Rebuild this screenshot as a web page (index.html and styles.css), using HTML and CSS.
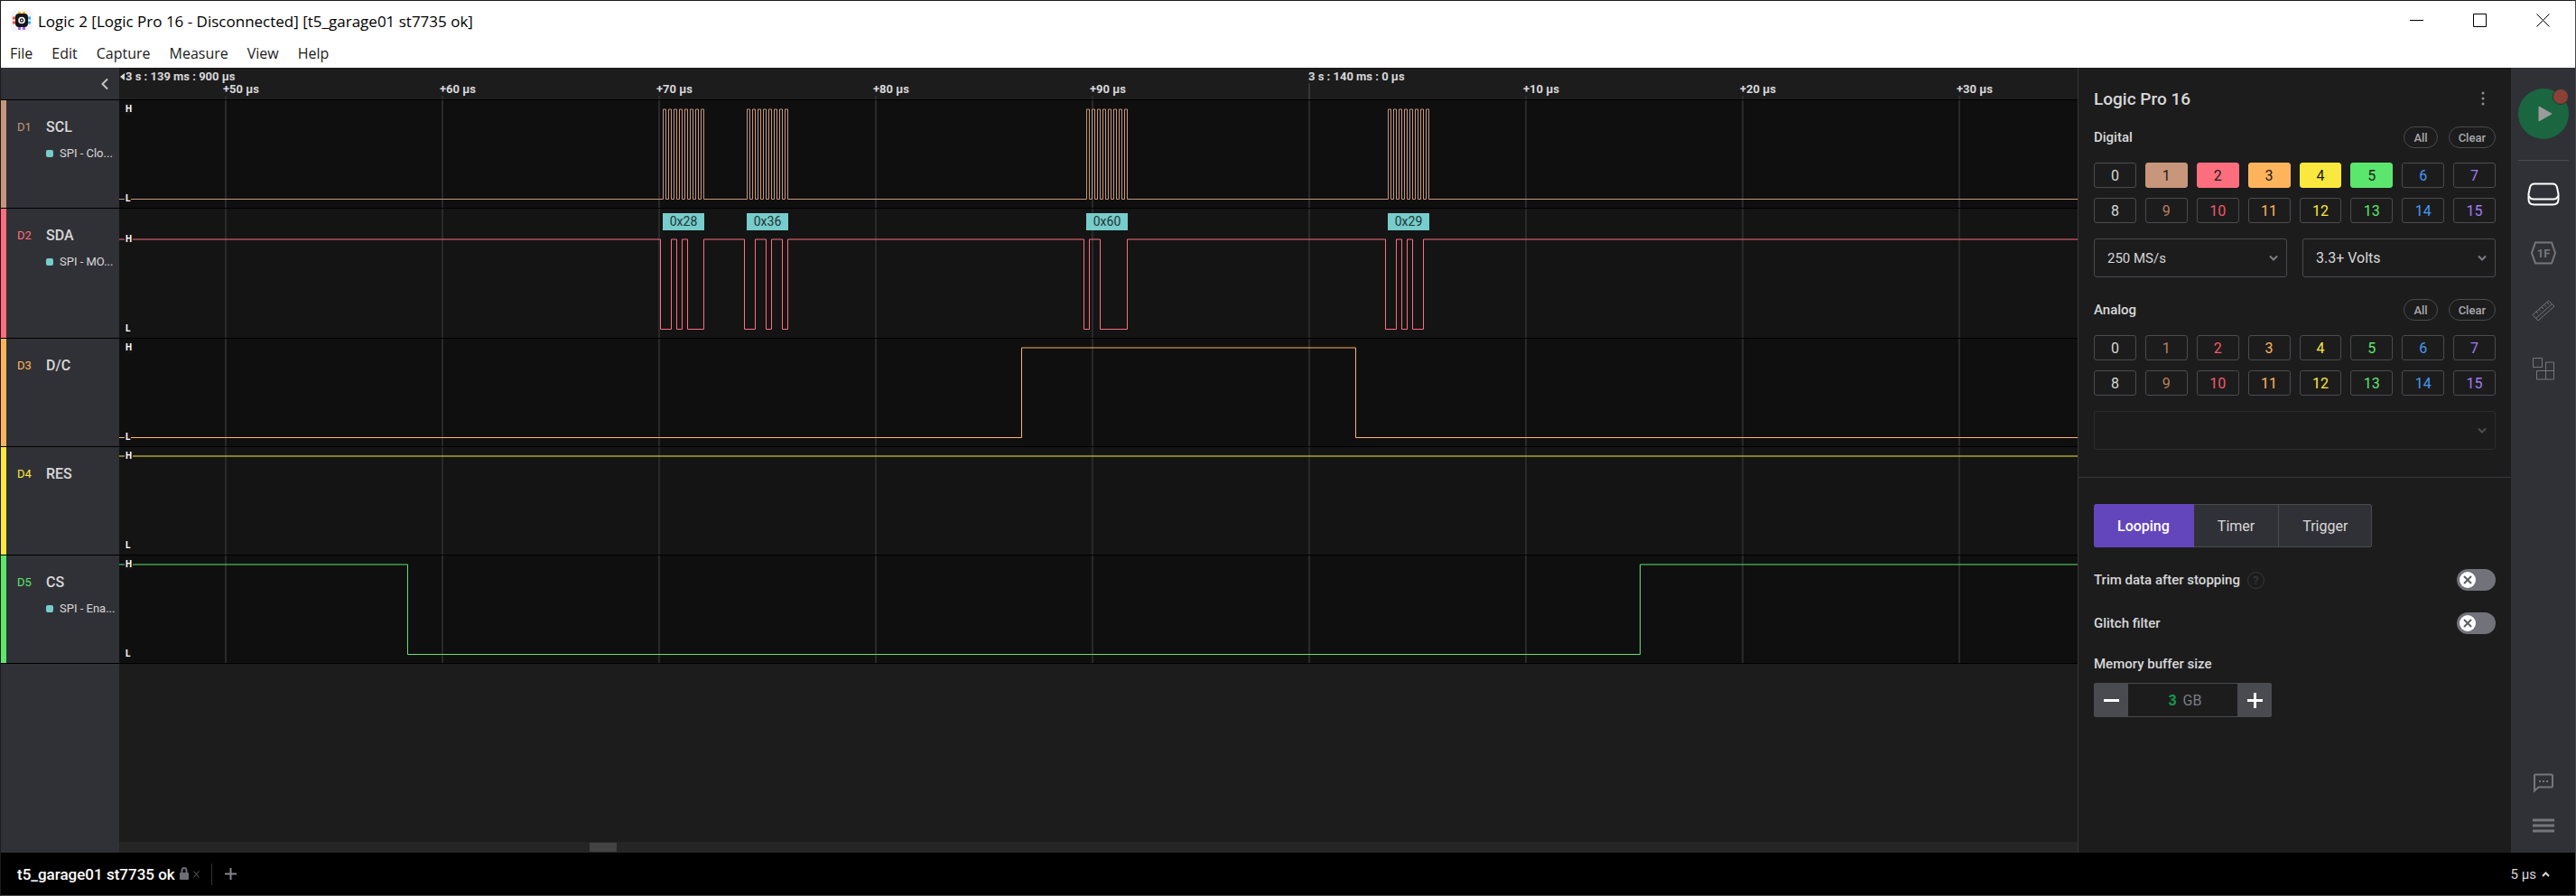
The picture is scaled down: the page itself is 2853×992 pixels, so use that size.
FILE: index.html
```
<!DOCTYPE html>
<html lang="en">
<head>
  <meta charset="UTF-8">
  <meta name="viewport" content="width=device-width, initial-scale=1.0">
  <title>Logic 2</title>
  <link rel="stylesheet" href="styles.css">
</head>
<body>
  <div class="window">
    <header class="titlebar">
      <svg class="titlebar__logo" width="24" height="24" viewBox="0 0 24 24">
        <rect width="24" height="24" rx="5" fill="#f4f3f8"/>
        <path d="M9.5 2v5M14.5 2v5" stroke="#fdbb13" stroke-width="3"/>
        <path d="M9.5 17v5M14.5 17v5" stroke="#a45cf0" stroke-width="3"/>
        <path d="M2 9h5M2 14h5" stroke="#f0503c" stroke-width="3"/>
        <path d="M17 9h5M17 14h5" stroke="#36a9f0" stroke-width="3"/>
        <rect x="5" y="4" width="14" height="15" rx="4" fill="#16161a"/>
        <circle cx="12" cy="11.5" r="3" fill="#16161a" stroke="#fff" stroke-width="1.6"/>
        <circle cx="12" cy="11.5" r="1" fill="#fff"/>
      </svg>
      <h1 class="titlebar__text">Logic 2 [Logic Pro 16 - Disconnected] [t5_garage01 st7735 ok]</h1>
      <div class="titlebar__controls">
        <button type="button" aria-label="Minimize"><svg width="16" height="16" viewBox="0 0 16 16"><path d="M0 7.5h15"/></svg></button>
        <button type="button" aria-label="Maximize"><svg width="16" height="16" viewBox="0 0 16 16"><path d="M.5.5h14v14H.5z"/></svg></button>
        <button type="button" aria-label="Close"><svg width="16" height="16" viewBox="0 0 16 16"><path d="M.5.5l14 14M14.5.5l-14 14"/></svg></button>
      </div>
    </header>

    <nav class="menubar">
      <a href="#">File</a>
      <a href="#">Edit</a>
      <a href="#">Capture</a>
      <a href="#">Measure</a>
      <a href="#">View</a>
      <a href="#">Help</a>
    </nav>

    <main class="main">
      <section class="capture">
        <div class="ruler">
          <div class="ruler__side">
            <button type="button" aria-label="Collapse">
              <svg width="10" height="14" viewBox="0 0 10 14"><path d="M8 1.5L2.5 7 8 12.5"/></svg>
            </button>
          </div>
          <div class="ruler__scale">
            <span class="ruler__start"><svg width="5" height="8" viewBox="0 0 5 8"><path d="M5 0v8L0 4z"/></svg>3 s : 139 ms : 900 µs</span>
            <span class="ruler__major">3 s : 140 ms : 0 µs</span>
            <div class="ruler__minor">
              <span>+50 µs</span>
              <span>+60 µs</span>
              <span>+70 µs</span>
              <span>+80 µs</span>
              <span>+90 µs</span>
              <span></span>
              <span>+10 µs</span>
              <span>+20 µs</span>
              <span>+30 µs</span>
            </div>
          </div>
        </div>

        <div class="channel channel--1">
          <div class="channel__side">
            <span class="channel__id">D1</span>
            <span class="channel__name">SCL</span>
            <span class="channel__analyzer">SPI - Clo...</span>
          </div>
          <div class="channel__plot">
            <svg class="wave"><path id="wave-scl"/></svg>
            <span class="level">H</span>
            <span class="level">L</span>
          </div>
        </div>

        <div class="channel channel--2">
          <div class="channel__side">
            <span class="channel__id">D2</span>
            <span class="channel__name">SDA</span>
            <span class="channel__analyzer">SPI - MO...</span>
          </div>
          <div class="channel__plot">
            <svg class="wave"><path id="wave-sda"/></svg>
            <span class="level">H</span>
            <span class="level">L</span>
            <span class="frame frame--1">0x28</span>
            <span class="frame frame--2">0x36</span>
            <span class="frame frame--3">0x60</span>
            <span class="frame frame--4">0x29</span>
          </div>
        </div>

        <div class="channel channel--3">
          <div class="channel__side">
            <span class="channel__id">D3</span>
            <span class="channel__name">D/C</span>
          </div>
          <div class="channel__plot">
            <svg class="wave"><path id="wave-dc"/></svg>
            <span class="level">H</span>
            <span class="level">L</span>
          </div>
        </div>

        <div class="channel channel--4">
          <div class="channel__side">
            <span class="channel__id">D4</span>
            <span class="channel__name">RES</span>
          </div>
          <div class="channel__plot">
            <svg class="wave"><path id="wave-res"/></svg>
            <span class="level">H</span>
            <span class="level">L</span>
          </div>
        </div>

        <div class="channel channel--5">
          <div class="channel__side">
            <span class="channel__id">D5</span>
            <span class="channel__name">CS</span>
            <span class="channel__analyzer">SPI - Ena...</span>
          </div>
          <div class="channel__plot">
            <svg class="wave"><path id="wave-cs"/></svg>
            <span class="level">H</span>
            <span class="level">L</span>
          </div>
        </div>

        <div class="rest">
          <div class="rest__side"></div>
          <div class="rest__plot">
            <div class="scrollbar"><div class="scrollbar__thumb"></div></div>
          </div>
        </div>
      </section>

      <aside class="panel">
        <section class="panel__section">
          <div class="panel__head">
            <h2>Logic Pro 16</h2>
            <button class="kebab" type="button" aria-label="Device menu">
              <svg width="4" height="16" viewBox="0 0 4 16"><circle cx="2" cy="2" r="1.5"/><circle cx="2" cy="8" r="1.5"/><circle cx="2" cy="14" r="1.5"/></svg>
            </button>
          </div>

          <div class="group-head">
            <h3>Digital</h3>
            <button class="pill" type="button">All</button>
            <button class="pill" type="button">Clear</button>
          </div>
          <div class="inputs">
            <button type="button" class="input input--0">0</button>
            <button type="button" class="input input--1 input--on">1</button>
            <button type="button" class="input input--2 input--on">2</button>
            <button type="button" class="input input--3 input--on">3</button>
            <button type="button" class="input input--4 input--on">4</button>
            <button type="button" class="input input--5 input--on">5</button>
            <button type="button" class="input input--6">6</button>
            <button type="button" class="input input--7">7</button>
            <button type="button" class="input input--0">8</button>
            <button type="button" class="input input--1">9</button>
            <button type="button" class="input input--2">10</button>
            <button type="button" class="input input--3">11</button>
            <button type="button" class="input input--4">12</button>
            <button type="button" class="input input--5">13</button>
            <button type="button" class="input input--6">14</button>
            <button type="button" class="input input--7">15</button>
          </div>
          <div class="selects">
            <div class="select select--rate">
              <select aria-label="Sample rate"><option>250 MS/s</option></select>
              <svg width="10" height="8" viewBox="0 0 10 8"><path d="M1 1.5l4 4 4-4"/></svg>
            </div>
            <div class="select">
              <select aria-label="Logic level"><option>3.3+ Volts</option></select>
              <svg width="10" height="8" viewBox="0 0 10 8"><path d="M1 1.5l4 4 4-4"/></svg>
            </div>
          </div>

          <div class="group-head group-head--analog">
            <h3>Analog</h3>
            <button class="pill" type="button">All</button>
            <button class="pill" type="button">Clear</button>
          </div>
          <div class="inputs">
            <button type="button" class="input input--0">0</button>
            <button type="button" class="input input--1">1</button>
            <button type="button" class="input input--2">2</button>
            <button type="button" class="input input--3">3</button>
            <button type="button" class="input input--4">4</button>
            <button type="button" class="input input--5">5</button>
            <button type="button" class="input input--6">6</button>
            <button type="button" class="input input--7">7</button>
            <button type="button" class="input input--0">8</button>
            <button type="button" class="input input--1">9</button>
            <button type="button" class="input input--2">10</button>
            <button type="button" class="input input--3">11</button>
            <button type="button" class="input input--4">12</button>
            <button type="button" class="input input--5">13</button>
            <button type="button" class="input input--6">14</button>
            <button type="button" class="input input--7">15</button>
          </div>
          <div class="selects">
            <div class="select select--disabled">
              <select aria-label="Analog sample rate" disabled></select>
              <svg width="10" height="8" viewBox="0 0 10 8"><path d="M1 1.5l4 4 4-4"/></svg>
            </div>
          </div>
        </section>

        <section class="panel__section panel__section--mode">
          <div class="tabs">
            <button type="button" class="tab tab--active">Looping</button>
            <button type="button" class="tab">Timer</button>
            <button type="button" class="tab">Trigger</button>
          </div>

          <div class="option">
            <label for="trim">Trim data after stopping</label>
            <span class="help">?</span>
            <span class="switch">
              <input id="trim" type="checkbox">
              <svg width="18" height="18" viewBox="0 0 18 18"><circle cx="9" cy="9" r="9"/><path d="M5 5l8 8M13 5l-8 8"/></svg>
            </span>
          </div>
          <div class="option">
            <label for="glitch">Glitch filter</label>
            <span class="switch">
              <input id="glitch" type="checkbox">
              <svg width="18" height="18" viewBox="0 0 18 18"><circle cx="9" cy="9" r="9"/><path d="M5 5l8 8M13 5l-8 8"/></svg>
            </span>
          </div>

          <label class="memory-label" for="memory">Memory buffer size</label>
          <div class="stepper">
            <button type="button" aria-label="Less"><svg width="17" height="17" viewBox="0 0 17 17"><path d="M0 8.5h17"/></svg></button>
            <div class="stepper__value">
              <input id="memory" type="text" value="3">
              <span>GB</span>
            </div>
            <button type="button" aria-label="More"><svg width="17" height="17" viewBox="0 0 17 17"><path d="M0 8.5h17M8.5 0v17"/></svg></button>
          </div>
        </section>
      </aside>

      <nav class="rail">
        <button class="play" type="button" aria-label="Start">
          <svg width="16" height="18" viewBox="0 0 16 18"><path d="M1 1v16l14-8z"/></svg>
          <span class="play__badge"></span>
        </button>
        <hr>
        <button class="rail__item rail__item--active" type="button" aria-label="Device">
          <svg width="36" height="26" viewBox="0 0 36 26"><path d="M8 1.5h20q4 0 5 4l1.500 7v6q0 6-6 6h-21q-6 0-6-6v-6l1.500-7q1-4 5-4z"/><path d="M2 15q1 3.500 5 3.500h22q4 0 5-3.500"/></svg>
        </button>
        <button class="rail__item" type="button" aria-label="Analyzers">
          <svg width="28" height="26" viewBox="0 0 28 26"><path d="M5 1.500h18l4 11.500-4 11.500H5L1 13z"/><text x="14" y="18">1F</text></svg>
        </button>
        <button class="rail__item rail__item--thin" type="button" aria-label="Measurements">
          <svg width="26" height="24" viewBox="0 0 26 24"><path d="M1 16.500L18.500 1 25 7 7 23zM4.500 20.500L22 5M5 13l2 2M8 10.500l2 2M11 8l2 2M14 5.500l2 2M17 3l2 2"/></svg>
        </button>
        <button class="rail__item rail__item--thin" type="button" aria-label="Extensions">
          <svg width="26" height="26" viewBox="0 0 26 26"><path d="M1.500 1.500h10v10h-10zM15.500 6h9v19h-19v-9.500h19M15.500 6v19"/></svg>
        </button>
        <button class="rail__item rail__item--bottom" type="button" aria-label="Feedback">
          <svg width="24" height="22" viewBox="0 0 24 22"><path d="M2 19.500V3q0-1.500 1.500-1.500h17Q22 1.500 22 3v11q0 1.500-1.500 1.500H6.500z"/><path d="M7 9h2M11 9h2M15 9h2"/></svg>
        </button>
        <button class="rail__item" type="button" aria-label="Menu">
          <svg width="24" height="16" viewBox="0 0 24 16"><path class="bars" d="M0 2h24M0 8h24M0 14h24"/></svg>
        </button>
      </nav>
    </main>

    <footer class="footer">
      <a class="footer__tab" href="#">t5_garage01 st7735 ok</a>
      <svg class="footer__lock" width="10" height="15" viewBox="0 0 10 15"><path d="M2.5 7V4q0-3 2.5-3t2.5 3v3"/><rect y="6" width="10" height="8" rx="1"/></svg>
      <button class="footer__close" type="button" aria-label="Close tab"><svg width="7" height="8" viewBox="0 0 7 8"><path d="M.5.5l6 7M6.5.5l-6 7"/></svg></button>
      <button class="footer__add" type="button" aria-label="New tab"><svg width="13" height="13" viewBox="0 0 13 13"><path d="M0 6.5h13M6.5 0v13"/></svg></button>
      <button class="footer__zoom" type="button">5 µs <svg width="9" height="6" viewBox="0 0 9 6"><path d="M1 5l3.5-3.5L8 5"/></svg></button>
    </footer>
  </div>

  <script src="script.js"></script>
</body>
</html>
```
FILE: styles.css
```
*,
*::after,
*::before {
  padding: 0;
  margin: 0;
  box-sizing: border-box;
}

:root {
  --bg: #1c1c1c;
  --side: #303136;
  --line: #4a4b50;
  --text: #d8d8da;
  --muted: #75767c;
  --teal: #77cdcb;
  --brown: #c8967a;
  --red: #ff6e7c;
  --orange: #ffb45c;
  --yellow: #fbe83f;
  --green: #5be66d;
  --blue: #4599f5;
  --violet: #a17df5;
}

body {
  font-family: Roboto, "Liberation Sans", sans-serif;
  font-size: 16px;
  color: var(--text);
  background-color: #000;
}

button,
input,
select {
  font: inherit;
  color: inherit;
  background: none;
  border: 0;
}

a {
  color: inherit;
  text-decoration: none;
}

svg {
  display: block;
  fill: none;
  stroke: currentColor;
}

.window {
  display: flex;
  flex-direction: column;
  height: 100vh;
  border: 1px solid #1c1b1f;
  border-bottom-color: #48484a;
  border-right-color: #48484a;
}

/* title and menu */

.titlebar {
  display: flex;
  align-items: center;
  height: 44px;
  padding-left: 11px;
  background-color: #fff;
  color: #000;
  font-family: "Open Sans", "Noto Sans", sans-serif;
}

.titlebar__logo {
  stroke: none;
}

.titlebar__text {
  flex: 1;
  margin-left: 6px;
  font-size: 17px;
  font-weight: 400;
}

.titlebar__controls {
  display: flex;
}

.titlebar__controls button {
  display: flex;
  align-items: center;
  justify-content: center;
  width: 70px;
  height: 44px;
}

.menubar {
  display: flex;
  align-items: center;
  gap: 21px;
  height: 30px;
  padding: 0 10px 2px;
  background-color: #fff;
  color: #1a1a1a;
  font-family: "Open Sans", "Noto Sans", sans-serif;
}

.main {
  display: flex;
  flex: 1;
  min-height: 0;
}

/* capture view */

.capture {
  display: flex;
  flex: 1;
  flex-direction: column;
  min-width: 0;
  background-color: var(--bg);
}

.ruler,
.channel,
.rest {
  display: grid;
  grid-template-columns: 131px 1fr;
}

.ruler {
  height: 36px;
  border-bottom: 1px solid #000;
}

.ruler__side {
  display: flex;
  align-items: center;
  justify-content: flex-end;
  padding-right: 11px;
  background-color: var(--side);
}

.ruler__side svg {
  stroke: #c4c4c6;
  stroke-width: 2;
}

.ruler__scale {
  position: relative;
  overflow: hidden;
  padding-top: 16px;
  font-size: 13px;
  font-weight: 700;
  line-height: 16px;
  white-space: nowrap;
  background: linear-gradient(90deg, #2b2b2e 2px, transparent 2px) 117px 31px / 240px 8px repeat-x;
}

.ruler__start,
.ruler__major {
  position: absolute;
  top: 2px;
  left: 1px;
}

.ruler__start {
  display: flex;
  align-items: center;
  gap: 1px;
}

.ruler__start svg {
  fill: currentColor;
  stroke: none;
}

.ruler__major {
  left: 1317px;
}

.ruler__major::after {
  content: "";
  position: absolute;
  top: 15px;
  left: 0;
  width: 2px;
  height: 20px;
  background-color: #36363a;
}

.ruler__minor {
  display: grid;
  grid-auto-flow: column;
  grid-auto-columns: 240px;
  margin-left: 115px;
}

.channel {
  height: 120px;
  border-bottom: 1px solid #000;
}

.channel__side {
  display: grid;
  grid-template-columns: 32px 1fr;
  grid-template-rows: 20px 18px;
  row-gap: 10px;
  align-items: center;
  padding: 19px 6px 0 12px;
  border-left: 6px solid var(--color);
  background-color: var(--side);
}

.channel__id {
  color: var(--color);
  font-size: 13px;
}

.channel__name {
  font-weight: 500;
}

.channel__analyzer {
  grid-column: 2;
  font-size: 13px;
  white-space: nowrap;
}

.channel__analyzer::before {
  content: "";
  display: inline-block;
  width: 8px;
  height: 8px;
  margin-right: 7px;
  border-radius: 2px;
  background-color: var(--teal);
}

.channel__plot {
  position: relative;
  display: flex;
  flex-direction: column;
  justify-content: space-between;
  align-items: flex-start;
  overflow: hidden;
  padding: 4px 6px;
  background: linear-gradient(90deg, #29292c 2px, transparent 2px) 117px 0 / 240px 100% #0f0f0f;
}

.channel--1 { --color: var(--brown); }
.channel--2 { --color: var(--red); }
.channel--3 { --color: var(--orange); }
.channel--4 { --color: var(--yellow); }
.channel--5 { --color: var(--green); }

.channel--2 {
  height: 144px;
}

.channel--2 .channel__plot {
  padding-top: 28px;
}

.channel--2 .channel__plot,
.channel--4 .channel__plot {
  background-color: #141414;
}

.wave {
  position: absolute;
  top: 0;
  left: 0;
  width: 100%;
  height: 100%;
  stroke: var(--color);
}

.level {
  position: relative;
  padding: 0 1px;
  border-radius: 3px;
  background-color: #131313;
  color: #fff;
  font-size: 10px;
  font-weight: 700;
  line-height: 12px;
}

/* decoded bytes sit on the time axis */
.frame {
  position: absolute;
  top: 5px;
  width: 46px;
  height: 19px;
  background-color: var(--teal);
  color: #1d3434;
  font-size: 14px;
  line-height: 19px;
  text-align: center;
}

.frame--1 { left: 602px; }
.frame--2 { left: 695px; }
.frame--3 { left: 1071px; }
.frame--4 { left: 1405px; }

.rest {
  flex: 1;
}

.rest__side {
  background-color: var(--side);
}

.rest__plot {
  display: flex;
  flex-direction: column;
  justify-content: flex-end;
}

.scrollbar {
  height: 12px;
  padding: 1px 0 1px 24%;
  background-color: #252525;
}

.scrollbar__thumb {
  width: 30px;
  height: 10px;
  background-color: #434343;
}

/* device panel */

.panel {
  width: 480px;
  border-left: 1px solid #36373b;
  background-color: var(--bg);
}

.panel__section {
  padding: 22px 17px 30px;
}

.panel__section--mode {
  padding-top: 29px;
  border-top: 1px solid #36373b;
}

.panel__head {
  display: flex;
  align-items: center;
  justify-content: space-between;
  height: 24px;
  padding-right: 12px;
}

.panel__head h2 {
  font-size: 19px;
  font-weight: 500;
}

.kebab svg {
  fill: #8c8d93;
  stroke: none;
}

.group-head {
  display: flex;
  align-items: center;
  gap: 12px;
  margin-top: 19px;
}

.group-head--analog {
  margin-top: 24px;
}

.group-head h3 {
  flex: 1;
  font-size: 15px;
  font-weight: 500;
}

.pill {
  height: 24px;
  padding: 0 10px;
  border: 1px solid var(--line);
  border-radius: 12px;
  color: #a9aaae;
  font-size: 13px;
  font-weight: 500;
}

.inputs {
  display: grid;
  grid-template-columns: repeat(8, 1fr);
  gap: 11px 10px;
  margin-top: 16px;
}

.input {
  height: 28px;
  border: 1px solid var(--line);
  border-radius: 3px;
  color: var(--color);
}

.input--0 { --color: var(--text); }
.input--1 { --color: var(--brown); }
.input--2 { --color: var(--red); }
.input--3 { --color: var(--orange); }
.input--4 { --color: var(--yellow); }
.input--5 { --color: var(--green); }
.input--6 { --color: var(--blue); }
.input--7 { --color: var(--violet); }

.input--1:not(.input--on) { color: #b9805f; }
.input--2:not(.input--on) { color: #f05a69; }

.input--on {
  border-color: var(--color);
  background-color: var(--color);
  color: #1c1c1c;
}

.selects {
  display: flex;
  gap: 17px;
  margin-top: 17px;
}

.select {
  position: relative;
  flex: 1;
}

.select select {
  display: block;
  width: 100%;
  height: 43px;
  padding: 0 14px;
  border: 1px solid var(--line);
  border-radius: 3px;
  appearance: none;
}

.select--rate select {
  font-size: 15px;
}

.select svg {
  position: absolute;
  top: 18px;
  right: 10px;
  stroke: #7d7e84;
  stroke-width: 2;
  pointer-events: none;
}

.select--disabled {
  opacity: 0.5;
}

.tabs {
  display: flex;
}

.tab {
  height: 48px;
  padding: 0 26px;
  border: 1px solid var(--line);
  border-left-width: 0;
  background-color: var(--side);
}

.tab:last-child {
  border-radius: 0 3px 3px 0;
}

.tab--active {
  border-color: #6446bc;
  border-radius: 3px 0 0 3px;
  background-color: #6446bc;
  color: #fff;
  font-weight: 500;
}

.option {
  display: flex;
  align-items: center;
  gap: 8px;
  margin-top: 24px;
  font-size: 15px;
  font-weight: 500;
}

.help {
  width: 19px;
  height: 19px;
  border: 1px solid #35363b;
  border-radius: 50%;
  color: #35363b;
  font-size: 13px;
  line-height: 17px;
  text-align: center;
}

.switch {
  position: relative;
  margin-left: auto;
}

.switch input {
  display: block;
  width: 43px;
  height: 24px;
  border-radius: 12px;
  background-color: #71727a;
  appearance: none;
}

.switch svg {
  position: absolute;
  top: 3px;
  left: 3px;
  stroke-width: 2;
  pointer-events: none;
}

.switch circle {
  fill: #fff;
  stroke: none;
}

.switch path {
  stroke: #5c5d64;
}

.memory-label {
  display: block;
  margin-top: 21px;
  font-size: 15px;
  font-weight: 500;
  line-height: 24px;
}

.stepper {
  display: inline-flex;
  height: 38px;
  margin-top: 9px;
  border-radius: 2px;
  overflow: hidden;
}

.stepper button {
  display: flex;
  align-items: center;
  justify-content: center;
  width: 38px;
  background-color: var(--line);
  color: #fff;
}

.stepper button svg {
  stroke-width: 3;
}

.stepper__value {
  display: flex;
  align-items: center;
  justify-content: center;
  gap: 6px;
  width: 121px;
  padding-left: 5px;
  border: solid var(--line);
  border-width: 1px 0;
  color: #7b7e88;
}

.stepper__value input {
  width: 10px;
  color: #0f9b4b;
  font-weight: 700;
}

/* icon rail */

.rail {
  display: flex;
  flex-direction: column;
  align-items: center;
  width: 71px;
  padding: 23px 0 22px;
  background-color: var(--side);
  color: var(--muted);
}

.rail hr {
  width: 56px;
  margin: 23px 0 24px;
  border: 0;
  border-top: 1px solid var(--line);
}

.play {
  position: relative;
  display: flex;
  align-items: center;
  justify-content: center;
  width: 56px;
  height: 56px;
  padding-left: 4px;
  border-radius: 50%;
  background-color: #1a6641;
}

.play svg {
  fill: #9a9c9b;
  stroke: #9a9c9b;
  stroke-linejoin: round;
}

.play__badge {
  position: absolute;
  top: 0;
  right: 0;
  width: 18px;
  height: 18px;
  border: 1px solid var(--side);
  border-radius: 50%;
  background-color: #8a4237;
}

.rail__item {
  margin-bottom: 39px;
  stroke-width: 2;
}

.rail__item--active {
  color: #fff;
}

.rail__item--thin {
  stroke-width: 1;
}

.rail__item text {
  fill: currentColor;
  stroke: none;
  font-size: 13px;
  font-weight: 700;
  text-anchor: middle;
}

.rail__item--bottom {
  margin-top: auto;
  margin-bottom: 28px;
}

.rail__item:last-child {
  margin-bottom: 0;
}

.bars {
  stroke-width: 3;
}

/* footer */

.footer {
  display: flex;
  align-items: center;
  height: 47px;
  padding: 0 28px 0 18px;
  background-color: #000;
}

.footer__tab {
  color: #fff;
  font-size: 17px;
  font-weight: 500;
}

.footer__lock {
  margin: 0 5px;
  color: #6c6d76;
  stroke-width: 2;
}

.footer__lock rect {
  fill: currentColor;
  stroke: none;
}

.footer__close {
  color: #63646b;
}

.footer__add {
  display: flex;
  align-items: center;
  height: 24px;
  margin-left: 13px;
  padding-left: 14px;
  border-left: 1px solid #333438;
  color: #85868e;
  stroke-width: 2;
}

.footer__zoom {
  display: flex;
  align-items: center;
  gap: 6px;
  margin-left: auto;
  font-size: 15px;
}

.footer__zoom svg {
  stroke-width: 2;
}
```
FILE: script.js
```
// every number is the x position where the line toggles
const clock = (start) => Array.from({ length: 16 }, (_, i) => start + i * 3);

const waves = {
  scl: { first: 0, high: 10, low: 109.5, edges: [602, 695, 1071, 1405].flatMap(clock) },
  sda: {
    first: 1, high: 34, low: 133.5,
    edges: [
      599, 611, 617, 623, 629, 647,
      692, 704, 716, 722, 734, 740,
      1068, 1074, 1086, 1116,
      1402, 1414, 1420, 1426, 1432, 1444
    ]
  },
  dc: { first: 0, high: 10, low: 109.5, edges: [999, 1369] },
  res: { first: 1, high: 10, low: 109.5, edges: [] },
  cs: { first: 1, high: 10, low: 109.5, edges: [319, 1684] }
};

Object.keys(waves).forEach((name) => {
  const wave = waves[name];
  let level = wave.first;
  let d = `M0 ${level ? wave.high : wave.low}`;
  wave.edges.forEach((x) => {
    level = 1 - level;
    d += `H${x + 0.5}V${level ? wave.high : wave.low}`;
  });
  d += 'H6000';
  document.getElementById(`wave-${name}`).setAttribute('d', d);
});
```
